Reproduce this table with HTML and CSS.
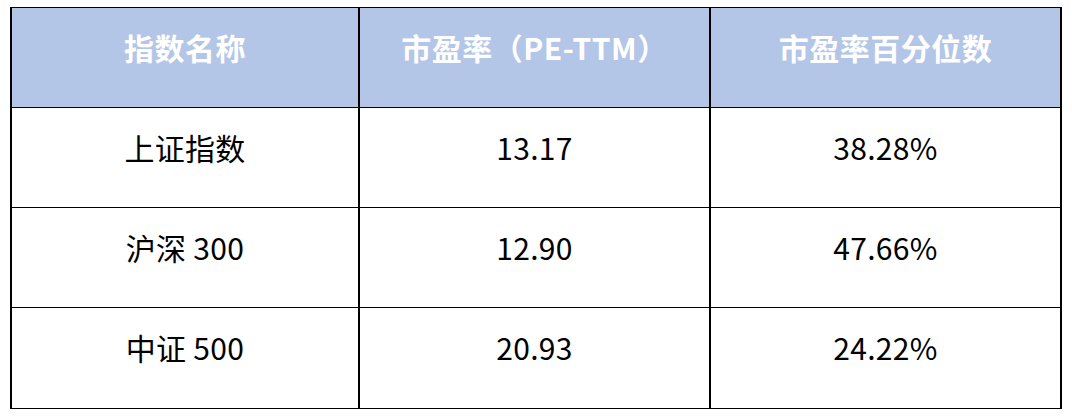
FILE: index.html
```html
<!DOCTYPE html>
<html lang="zh">
<head>
<meta charset="utf-8">
<title>市盈率</title>
<link rel="stylesheet" href="styles.css">
</head>
<body>
<div class="table">
  <div class="cell head">指数名称</div>
  <div class="cell head">市盈率（PE-TTM）</div>
  <div class="cell head">市盈率百分位数</div>
  <div class="cell">上证指数</div>
  <div class="cell">13.17</div>
  <div class="cell">38.28%</div>
  <div class="cell">沪深 300</div>
  <div class="cell">12.90</div>
  <div class="cell">47.66%</div>
  <div class="cell">中证 500</div>
  <div class="cell">20.93</div>
  <div class="cell">24.22%</div>
</div>
</body>
</html>
```

FILE: styles.css
```css
html, body {
  margin: 0;
  padding: 0;
  background: #ffffff;
}
body {
  font-family: "Noto Sans CJK SC", "Noto Sans", sans-serif;
}
.table {
  margin: 7px 0 0 10px;
  width: 1052px;
  box-sizing: border-box;
  display: grid;
  grid-template-columns: 346px 349px 349px;
  grid-template-rows: 99px 99px 99px 100px;
  gap: 1px 2px;
  padding: 1px 2px;
  background: #000000;
}
.cell {
  background: #ffffff;
  color: #000000;
  font-size: 30px;
  letter-spacing: 0.3px;
  display: flex;
  align-items: center;
  justify-content: center;
  padding-bottom: 22px;
  box-sizing: border-box;
  white-space: nowrap;
}
.head {
  background: #b4c6e7;
  color: #ffffff;
  font-weight: 700;
  letter-spacing: 0.5px;
}
```
